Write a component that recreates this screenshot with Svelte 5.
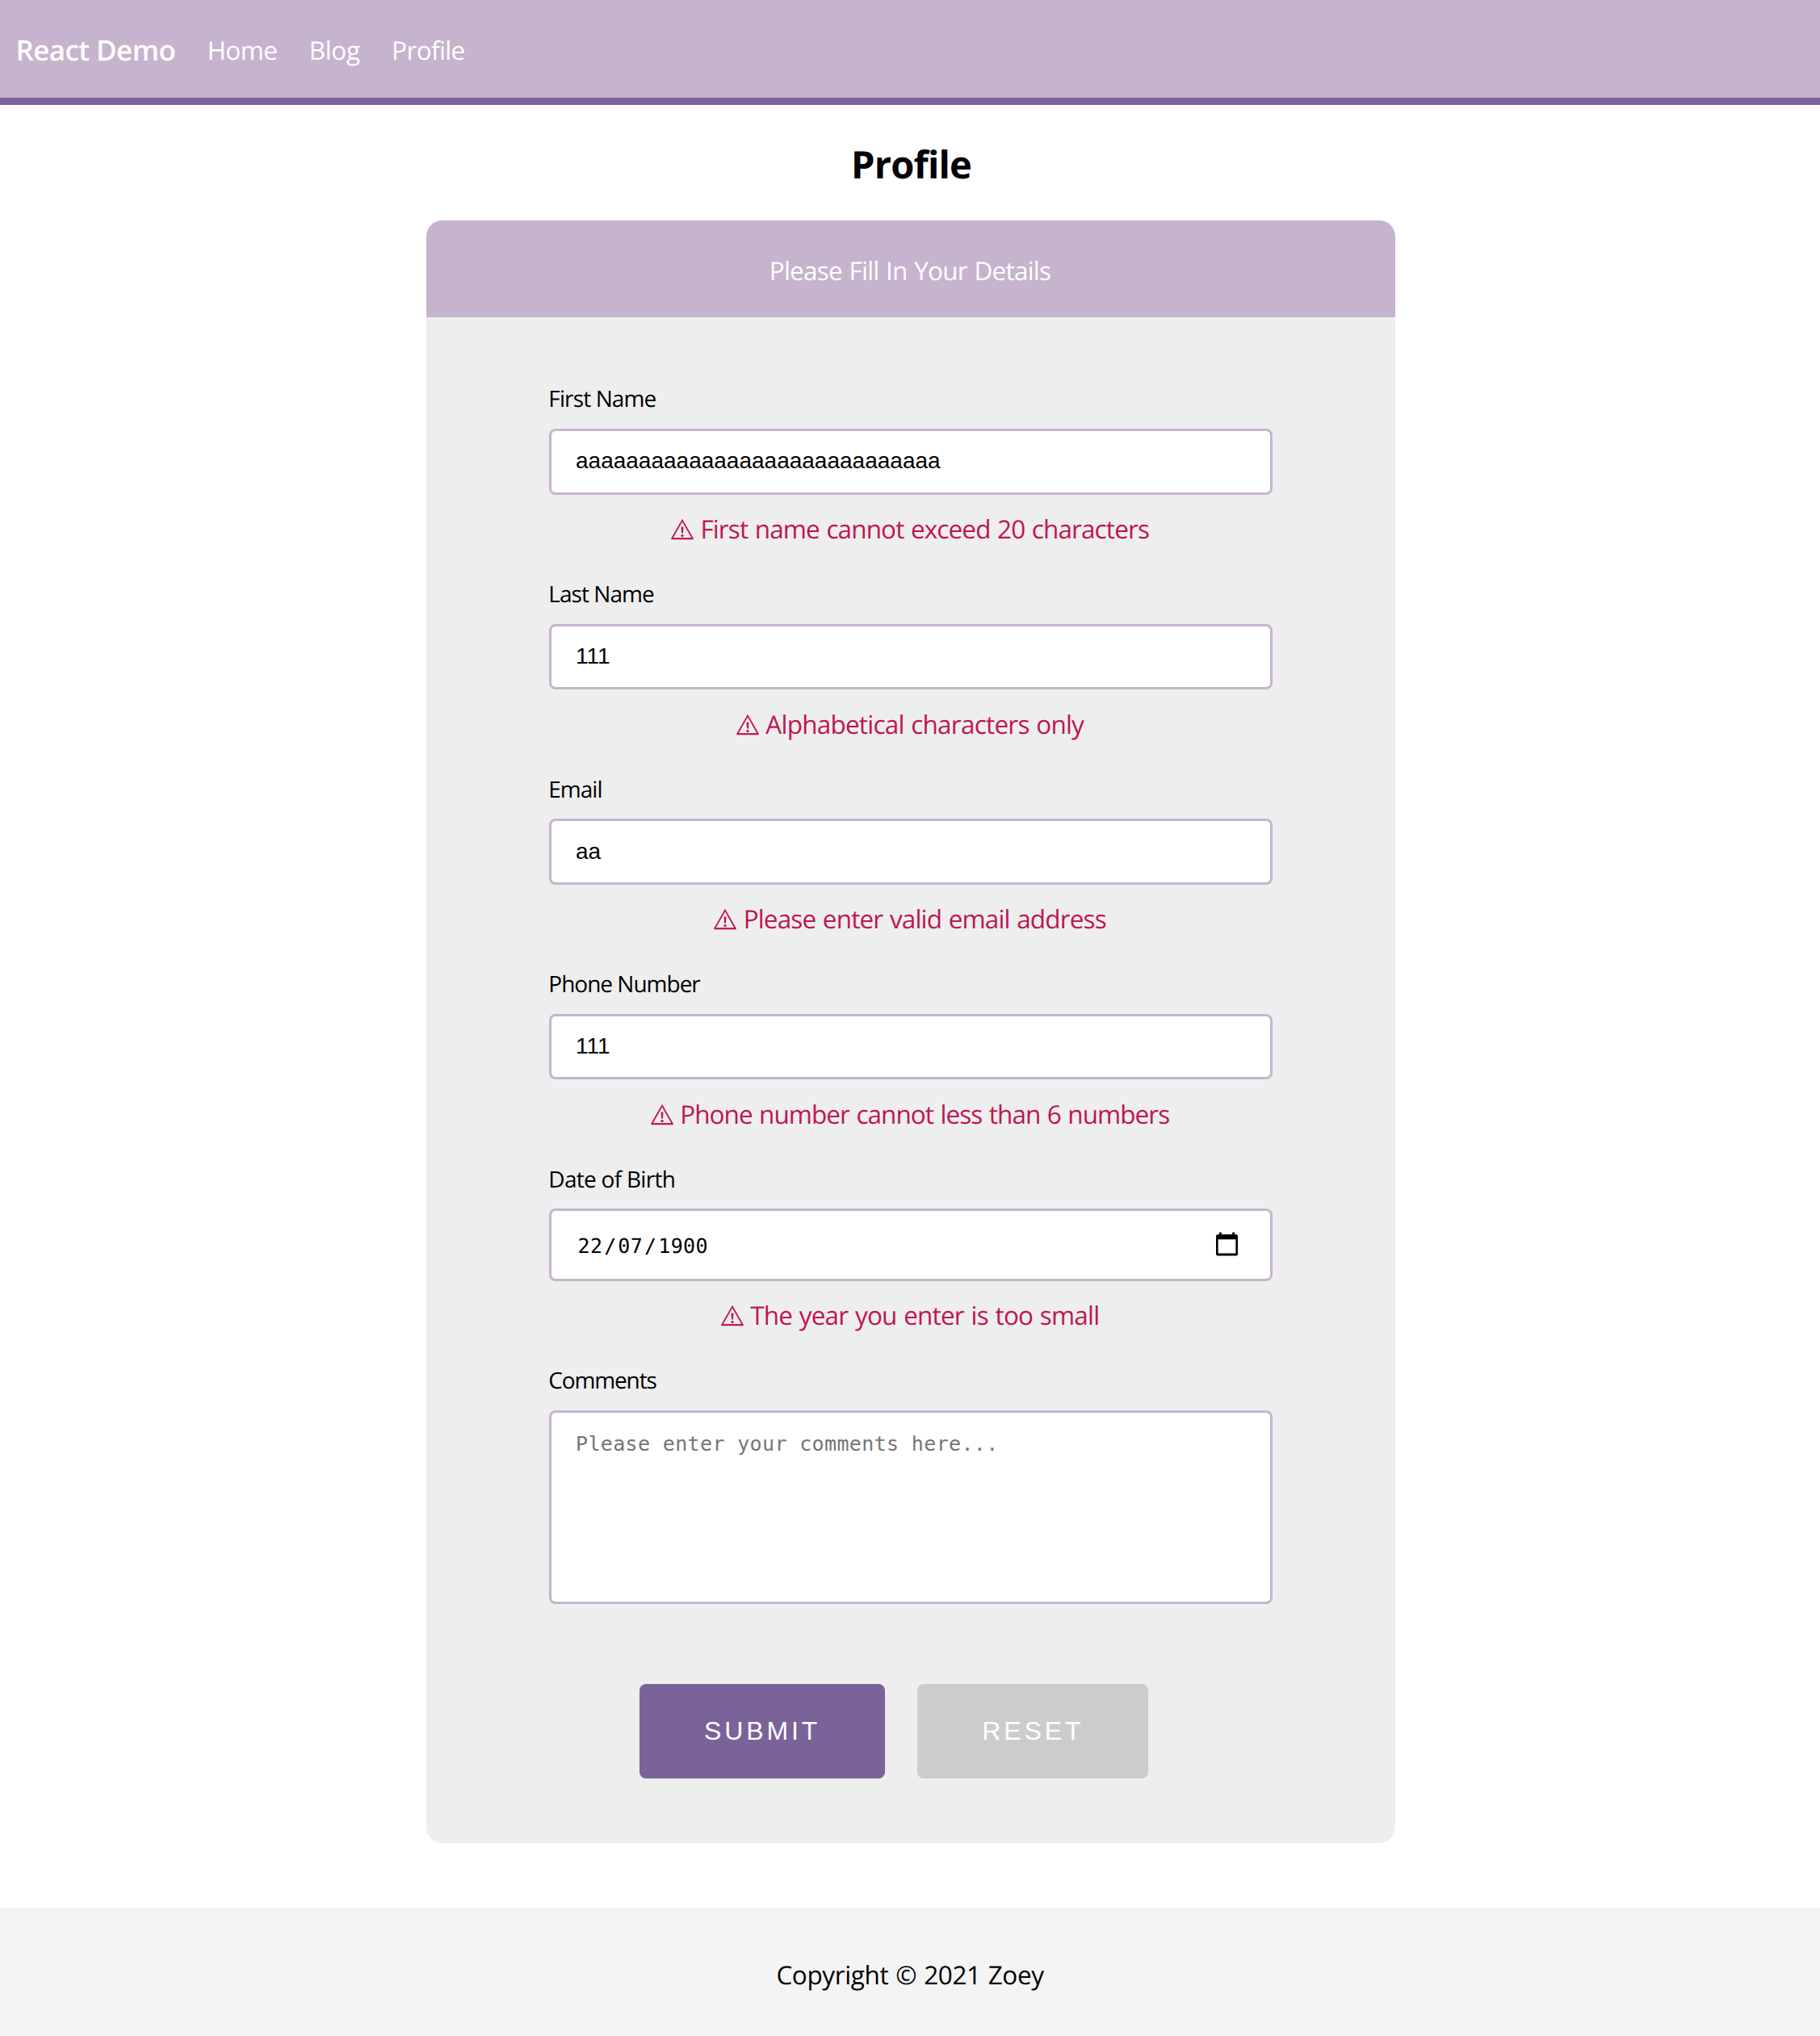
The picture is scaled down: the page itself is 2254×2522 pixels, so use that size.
<script lang="ts">
  type Tracked = { text: string; track: number };
  type Field = {
    id: string;
    label: Tracked;
    value: string;
    error: Tracked;
  };

  const links: Tracked[] = [
    { text: 'Home', track: -0.6 },
    { text: 'Blog', track: -0.4 },
    { text: 'Profile', track: -0.65 }
  ];

  const fields: Field[] = [
    {
      id: 'first-name',
      label: { text: 'First Name', track: -0.87 },
      value: 'aaaaaaaaaaaaaaaaaaaaaaaaaaaaa',
      error: { text: 'First name cannot exceed 20 characters', track: -0.89 }
    },
    {
      id: 'last-name',
      label: { text: 'Last Name', track: -0.95 },
      value: '111',
      error: { text: 'Alphabetical characters only', track: -0.78 }
    },
    {
      id: 'email',
      label: { text: 'Email', track: -1 },
      value: 'aa',
      error: { text: 'Please enter valid email address', track: -0.85 }
    },
    {
      id: 'phone',
      label: { text: 'Phone Number', track: -1 },
      value: '111',
      error: { text: 'Phone number cannot less than 6 numbers', track: -0.95 }
    }
  ];
</script>

{#snippet warning(error: Tracked)}
  <p class="error">
    <svg class="warn" viewBox="0 0 28 26" aria-hidden="true">
      <path d="M1.2 24 L14 1.6 L26.8 24" fill="none" stroke="currentColor" stroke-width="1.8" />
      <path d="M0.4 24.2 H27.6" stroke="currentColor" stroke-width="2.2" />
      <path d="M12.6 9.5 H15.4 L15 17.6 H13 Z" fill="currentColor" />
      <circle cx="14" cy="20.6" r="1.7" fill="currentColor" />
    </svg>
    <span style:letter-spacing="{error.track}px">{error.text}</span>
  </p>
{/snippet}

<header class="nav">
  <strong class="brand">React Demo</strong>
  {#each links as link}
    <a href="#top" style:letter-spacing="{link.track}px">{link.text}</a>
  {/each}
</header>

<main>
  <h1>Profile</h1>

  <section class="card">
    <div class="card-head">Please Fill In Your Details</div>

    <form class="card-body">
      {#each fields as field}
        <div class="field">
          <label for={field.id} style:letter-spacing="{field.label.track}px">{field.label.text}</label>
          <input id={field.id} class="control" type="text" value={field.value} />
          {@render warning(field.error)}
        </div>
      {/each}

      <div class="field">
        <label for="dob" class="dob-label">Date of Birth</label>
        <div id="dob" class="control date">
          <span class="date-value">22<span class="slash">/</span>07<span class="slash">/</span>1900</span>
          <svg class="calendar" viewBox="0 0 27 30" aria-hidden="true">
            <path
              fill="#000"
              fill-rule="evenodd"
              d="M4 0.5 H6.8 V3 H20.2 V0.5 H23 V3 H24.5 A2.5 2.5 0 0 1 27 5.5 V27 A2.5 2.5 0 0 1 24.5 29.5 H2.5 A2.5 2.5 0 0 1 0 27 V5.5 A2.5 2.5 0 0 1 2.5 3 H4 Z M2.6 9.3 V26.5 H24.4 V9.3 Z"
            />
          </svg>
        </div>
        {@render warning({ text: 'The year you enter is too small', track: -0.8 })}
      </div>

      <div class="field">
        <label for="comments" class="comments-label">Comments</label>
        <textarea id="comments" class="control" placeholder="Please enter your comments here..."></textarea>
      </div>

      <div class="actions">
        <button type="button" class="submit">SUBMIT</button>
        <button type="button" class="reset">RESET</button>
      </div>
    </form>
  </section>
</main>

<footer>Copyright © 2021 Zoey</footer>

<style>
  :global(body) {
    margin: 0;
    background: #fff;
    color: #000;
    font-family: 'Open Sans', 'Noto Sans', sans-serif;
    font-size: 31.5px;
    text-rendering: geometricPrecision;
  }

  .nav {
    box-sizing: border-box;
    display: flex;
    align-items: center;
    gap: 39.5px;
    height: 129.5px;
    padding: 5px 19.5px 0;
    background: #c6b4ce;
    border-bottom: 9.5px solid #7a6399;
    color: #fff;
  }

  .brand {
    font-size: 35px;
    font-weight: 600;
    letter-spacing: -0.6px;
  }

  .nav a {
    color: inherit;
    text-decoration: none;
  }

  h1 {
    box-sizing: border-box;
    height: 143.8px;
    margin: 0;
    padding: 4px 0 0 1px;
    line-height: 139.8px;
    font-size: 47px;
    font-weight: 700;
    letter-spacing: -0.8px;
    text-align: center;
  }

  .card {
    width: 1200px;
    margin: 0 auto 80px;
    overflow: hidden;
    border-radius: 20px;
    background: #eee;
  }

  main {
    padding-left: 2px;
  }

  .card-head {
    box-sizing: border-box;
    height: 120.2px;
    padding: 5px 2px 0 0;
    line-height: 115.2px;
    background: #c6b4ce;
    color: #fff;
    letter-spacing: -0.78px;
    word-spacing: 1.2px;
    text-align: center;
  }

  .card-body {
    padding: 80.9px 152px 80px;
  }

  .field {
    display: flex;
    flex-direction: column;
  }

  label {
    margin: 0 0 16.8px -0.7px;
    line-height: 40px;
    font-size: 28px;
  }

  .dob-label {
    letter-spacing: -0.72px;
  }

  .comments-label {
    letter-spacing: -1.15px;
  }

  .control {
    box-sizing: border-box;
    width: 100%;
    height: 81.4px;
    margin: 0;
    padding: 0 30px 1px;
    border: 3px solid #c6b4ce;
    border-radius: 8px;
    background: #fff;
    color: #000;
    font-family: 'Liberation Sans', Arial, sans-serif;
    font-size: 28px;
    outline: none;
  }

  .date {
    display: flex;
    align-items: center;
    justify-content: space-between;
    height: 89.4px;
    padding: 2px 40px 0 32.5px;
    font-family: 'DejaVu Sans Mono', monospace;
    font-size: 25px;
    letter-spacing: 0.37px;
  }

  .slash {
    margin: 0 1.8px;
  }

  .calendar {
    width: 27px;
    height: 30px;
    margin-bottom: 4px;
  }

  textarea.control {
    display: block;
    height: 240px;
    padding: 23.5px 30px;
    font-family: 'DejaVu Sans Mono', monospace;
    font-size: 25px;
    line-height: 30px;
    letter-spacing: 0.35px;
    resize: none;
  }

  textarea::placeholder {
    color: #757575;
    opacity: 1;
  }

  .error {
    display: flex;
    align-items: center;
    justify-content: center;
    gap: 8.5px;
    height: 44px;
    margin: 21.4px 0 38px;
    padding-right: 2px;
    line-height: 44px;
    word-spacing: 1.2px;
    white-space: nowrap;
    color: #bf1650;
  }

  .warn {
    width: 28px;
    height: 26px;
    margin-top: 0;
  }

  .actions {
    display: flex;
    gap: 40px;
    margin-top: 98.6px;
    padding-left: 112px;
  }

  button {
    height: 117.2px;
    padding: 0 80px 0.5px;
    border: 0;
    border-radius: 8px;
    color: #fff;
    font-family: 'Liberation Sans', Arial, sans-serif;
    font-size: 32px;
    letter-spacing: 3.9px;
  }

  .submit {
    background: #7a6399;
  }

  .reset {
    background: #ccc;
  }

  footer {
    box-sizing: border-box;
    height: 159px;
    padding-top: 9px;
    line-height: 150px;
    background: #f4f4f4;
    letter-spacing: -0.38px;
    word-spacing: 1.2px;
    text-align: center;
  }
</style>
